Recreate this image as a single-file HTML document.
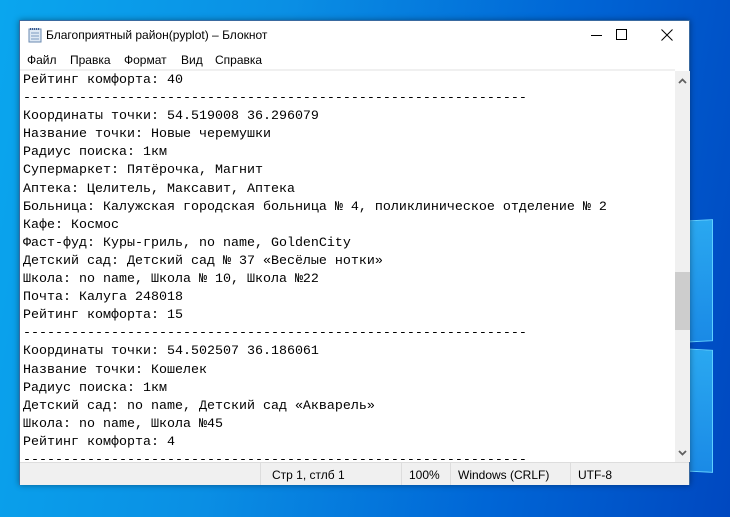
<!DOCTYPE html>
<html><head><meta charset="utf-8"><style>
*{margin:0;padding:0;box-sizing:border-box}
body{width:730px;height:517px;overflow:hidden;position:relative;background:linear-gradient(100deg,#0aa6ee 0%,#0a8fe4 35%,#0066d6 70%,#0048c0 100%);font-family:"Segoe UI","Liberation Sans",sans-serif}
.pane{position:absolute;background:linear-gradient(180deg,#2aa8f0,#1a8ae6);border:1px solid #5fd0ff}
.win{position:absolute;left:19px;top:20px;width:671px;height:465px;background:#fff;border:1px solid #3a6aa0;box-shadow:0 0 6px rgba(0,0,0,.4)}
.title{position:absolute;left:0;top:0;height:28px;width:100%;font-size:12px;color:#000}
.title span{position:absolute;left:26px;top:7px}
.menu{position:absolute;top:29px;left:0;height:19px;width:100%;font-size:12px}
.menu span{position:absolute;top:3px}
.text{position:absolute;left:0;top:48px;width:655px;height:393px;border-top:2px solid #f0f0f0;overflow:hidden;font-family:"Liberation Mono",monospace;font-size:13.33px;line-height:18.1px;color:#000;padding-left:3px;padding-top:1px;white-space:pre}
.sb{position:absolute;left:655px;top:50px;width:15px;height:391px;background:#f0f0f0}
.status{position:absolute;left:0;top:441px;width:669px;height:23px;background:#f0f0f0;border-top:1px solid #ddd;font-size:12px}
.status span{position:absolute;top:5px}
.status i{position:absolute;top:0;width:1px;height:22px;background:#ddd}
</style></head><body>
<div class="pane" style="left:680px;top:220px;width:33px;height:122px;transform:skewY(-3deg)"></div>
<div class="pane" style="left:680px;top:349px;width:33px;height:123px;transform:skewY(3deg)"></div>
<div class="win">
<div class="title">
<svg style="position:absolute;left:8px;top:6px" width="14" height="16"><rect x="1" y="2" width="12" height="13" fill="#dde8f4" stroke="#6a8ab0"/><path d="M3 6h8M3 9h8M3 12h8" stroke="#7a9ac0"/><path d="M2 2h10" stroke="#3a5a90" stroke-width="2" stroke-dasharray="1 1"/></svg>
<span>Благоприятный район(pyplot) – Блокнот</span>
<div style="position:absolute;left:571px;top:14px;width:11px;height:1px;background:#000"></div>
<div style="position:absolute;left:596px;top:8px;width:11px;height:11px;border:1px solid #000"></div>
<svg style="position:absolute;left:641px;top:8px" width="12" height="12"><path d="M0.5 0.5L11.5 11.5M11.5 0.5L0.5 11.5" stroke="#000"/></svg>
</div>
<div class="menu"><span style="left:7px">Файл</span><span style="left:50px">Правка</span><span style="left:104px">Формат</span><span style="left:161px">Вид</span><span style="left:195px">Справка</span></div>
<div class="text">Рейтинг комфорта: 40
---------------------------------------------------------------
Координаты точки: 54.519008 36.296079
Название точки: Новые черемушки
Радиус поиска: 1км
Супермаркет: Пятёрочка, Магнит
Аптека: Целитель, Максавит, Аптека
Больница: Калужская городская больница № 4, поликлиническое отделение № 2
Кафе: Космос
Фаст-фуд: Куры-гриль, no name, GoldenCity
Детский сад: Детский сад № 37 «Весёлые нотки»
Школа: no name, Школа № 10, Школа №22
Почта: Калуга 248018
Рейтинг комфорта: 15
---------------------------------------------------------------
Координаты точки: 54.502507 36.186061
Название точки: Кошелек
Радиус поиска: 1км
Детский сад: no name, Детский сад «Акварель»
Школа: no name, Школа №45
Рейтинг комфорта: 4
---------------------------------------------------------------</div>
<div class="sb">
<svg style="position:absolute;left:3px;top:7px" width="9" height="6"><path d="M1 5L4.5 1.5L8 5" stroke="#606060" stroke-width="1.8" fill="none"/></svg>
<div style="position:absolute;left:0;top:201px;width:15px;height:58px;background:#cdcdcd"></div>
<svg style="position:absolute;left:3px;top:379px" width="9" height="6"><path d="M1 1L4.5 4.5L8 1" stroke="#606060" stroke-width="1.8" fill="none"/></svg>
</div>
<div class="status">
<i style="left:240px"></i><span style="left:252px">Стр 1, стлб 1</span>
<i style="left:381px"></i><span style="left:389px">100%</span>
<i style="left:430px"></i><span style="left:438px">Windows (CRLF)</span>
<i style="left:550px"></i><span style="left:558px">UTF-8</span>
</div>
</div>
</body></html>
